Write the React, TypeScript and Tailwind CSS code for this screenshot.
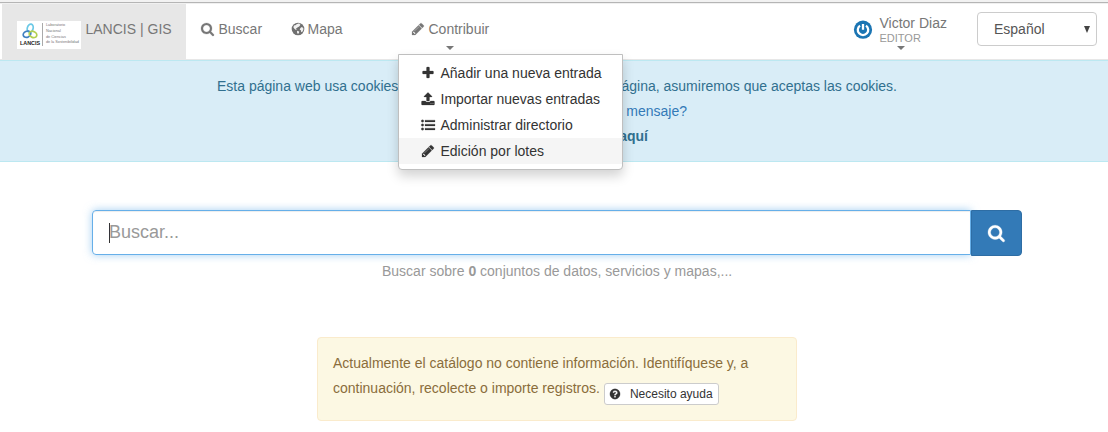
import React from "react";

const SEARCH =
  "M1152 832q0-185-131.5-316.5t-316.5-131.5-316.5 131.5-131.5 316.5 131.5 316.5 316.5 131.5 316.5-131.5 131.5-316.5zm512 832q0 52-38 90t-90 38q-54 0-90-38l-343-342q-179 124-399 124-143 0-273.5-55.5t-225-150-150-225-55.5-273.5 55.5-273.5 150-225 225-150 273.5-55.5 273.5 55.5 225 150 150 225 55.5 273.5q0 220-124 399l343 343q37 37 37 90z";
const PLUS =
  "M1600 736v192q0 40-28 68t-68 28h-416v416q0 40-28 68t-68 28h-192q-40 0-68-28t-28-68v-416h-416q-40 0-68-28t-28-68v-192q0-40 28-68t68-28h416v-416q0-40 28-68t68-28h192q40 0 68 28t28 68v416h416q40 0 68 28t28 68z";
const UPLOAD =
  "M1344 1472q0-26-19-45t-45-19-45 19-19 45 19 45 45 19 45-19 19-45zm256 0q0-26-19-45t-45-19-45 19-19 45 19 45 45 19 45-19 19-45zm128-224v320q0 40-28 68t-68 28h-1472q-40 0-68-28t-28-68v-320q0-40 28-68t68-28h427q21 56 70.5 92t110.5 36h256q61 0 110.5-36t70.5-92h427q40 0 68 28t28 68zm-325-648q-17 40-59 40h-256v448q0 26-19 45t-45 19h-256q-26 0-45-19t-19-45v-448h-256q-42 0-59-40-17-39 14-69l448-448q18-19 45-19t45 19l448 448q31 30 14 69z";
const LIST =
  "M192 224a160 160 0 1 0 0 320a160 160 0 1 0 0-320zM192 736a160 160 0 1 0 0 320a160 160 0 1 0 0-320zM192 1248a160 160 0 1 0 0 320a160 160 0 1 0 0-320zM512 272h1280v224h-1280zM512 784h1280v224h-1280zM512 1296h1280v224h-1280z";
const PENCIL =
  "M491 1536l91-91-235-235-91 91v107h128v128h107zm523-928q0-22-22-22-10 0-17 7l-542 542q-7 7-7 17 0 22 22 22 10 0 17-7l542-542q7-7 7-17zm-54-192l416 416-832 832h-416v-416zm683 96q0 53-37 90l-166 166-416-416 166-165q36-38 90-38 53 0 91 38l235 234q37 39 37 91z";
const QUESTION =
  "M1024 1376v-192q0-14-9-23t-23-9h-192q-14 0-23 9t-9 23v192q0 14 9 23t23 9h192q14 0 23-9t9-23zm256-672q0-88-55.5-163t-138.5-116-170-41q-243 0-371 213-15 24 8 42l132 100q7 6 19 6 16 0 25-12 53-68 86-92 34-24 86-24 48 0 85.5 26t37.5 59q0 38-20 61t-68 45q-63 28-115.5 86.5t-52.5 125.5v36q0 14 9 23t23 9h192q14 0 23-9t9-23q0-19 21.5-49.5t54.5-49.5q32-18 49-28.5t46-35 44.5-48 28-60.5 12.5-81zm384 192q0 209-103 385.5t-279.5 279.5-385.5 103-385.5-103-279.5-279.5-103-385.5 103-385.5 279.5-279.5 385.5-103 385.5 103 279.5 279.5 103 385.5z";

function Icon({ d, className = "size-3.5" }: { d: string; className?: string }) {
  return (
    <svg viewBox="0 0 1792 1792" fill="currentColor" stroke="currentColor" strokeWidth="30" className={`shrink-0 overflow-visible ${className}`}>
      <path d={d} />
    </svg>
  );
}

function Globe() {
  return (
    <svg viewBox="0 0 14 14" className="size-3.5 shrink-0">
      <circle cx="7" cy="7" r="6.3" fill="#707070" />
      <path d="M7.4 1.6L9.6 2 8.6 3 9.3 3.6 7.8 4.8 6.6 5.3 5.9 6.3 4.8 6.3 5.7 7.9 4.6 7.8 3.2 6.6 2.4 5.3 3 3.6 4.4 3.3 5.6 2.3zM9.4 5.9L10.8 4.9 12.3 6.1 12.3 8 11 10.2 10.1 9.7 9.9 8.3 8.7 7.7zM6.1 8.8L8.2 9.6 8 10.9 6.9 12 6 10.6z" fill="#fff" opacity="0.9" />
    </svg>
  );
}

function Caret() {
  return <span className="block h-0 w-0 border-x-4 border-t-4 border-x-transparent border-t-[#777]" />;
}

function Logo() {
  return (
    <div className="flex h-7 w-16 bg-white">
      <div className="flex w-[25px] flex-col items-center pt-[2px] pl-px">
        <svg viewBox="0 0 16 17" className="h-[17px] w-4" fill="none" strokeWidth="1.7">
          <ellipse cx="8.2" cy="5.2" rx="2.9" ry="4.2" stroke="#6cc9e6" transform="rotate(15 8.2 5.2)" />
          <ellipse cx="5" cy="11.2" rx="3.9" ry="3" stroke="#3f7fc0" transform="rotate(-25 5 11.2)" />
          <ellipse cx="11" cy="11.4" rx="3.9" ry="3" stroke="#b3d050" transform="rotate(25 11 11.4)" />
        </svg>
        <span className="text-[5.4px] leading-[7px] font-bold text-[#222]">LANCIS</span>
      </div>
      <div className="mt-0.5 h-[23px] w-px bg-[#aaa]" />
      <div className="flex flex-col pt-[2px] pl-[3px] text-[3.8px] leading-[5.8px] whitespace-nowrap text-[#777]">
        <span>Laboratorio</span>
        <span>Nacional</span>
        <span>de Ciencias</span>
        <span>de la Sostenibilidad</span>
      </div>
    </div>
  );
}

const menu = [
  { d: PLUS, label: "Añadir una nueva entrada" },
  { d: UPLOAD, label: "Importar nuevas entradas" },
  { d: LIST, label: "Administrar directorio" },
  { d: PENCIL, label: "Edición por lotes", active: true },
];

function ContributeMenu() {
  return (
    <ul className="absolute top-[50px] -left-[13px] z-10 w-[225px] rounded-b border border-[#bfbfbf] bg-white py-[5px] shadow-[0_6px_12px_rgba(0,0,0,0.175)]">
      {menu.map((m) => (
        <li key={m.label} className={`flex h-[26px] items-center gap-1.5 pl-[21.5px] text-[#333] ${m.active ? "bg-[#f5f5f5]" : ""}`}>
          <Icon d={m.d} />
          <span>{m.label}</span>
        </li>
      ))}
    </ul>
  );
}

export default function App() {
  return (
    <div className="h-[432px] w-[1108px] overflow-hidden bg-white font-['Liberation_Sans',Arial,sans-serif] text-sm leading-5 text-[#333]">
      <div className="h-[3px] border-b border-[#b5b5b5] bg-[#f2f2f2]" />
      <header className="flex h-[57px] border-t border-b border-t-[#f0f0f0] border-b-[#e7e7e7] pl-0.5 text-[#777]">
        <div className="flex w-[184px] bg-[#e7e7e7] pt-[17px] pl-[15px]">
          <Logo />
          <span className="-mt-1.5 ml-[4.5px] pt-[4px]">LANCIS | GIS</span>
        </div>
        <nav className="flex pt-[15px] pl-[15px]">
          <div className="flex h-5 w-[90px] items-center gap-[3.5px]"><Icon d={SEARCH} />Buscar</div>
          <div className="flex h-5 w-[120px] items-center gap-[2.5px]"><Globe />Mapa</div>
          <div className="relative h-5 w-[110px]">
            <div className="flex items-center gap-[3.5px]"><Icon d={PENCIL} />Contribuir</div>
            <div className="pt-[7px] pl-[35px]"><Caret /></div>
            <div className="absolute top-0 left-0 -mt-[15px]"><ContributeMenu /></div>
          </div>
        </nav>
        <div className="ml-auto flex w-[124px] pt-4">
          <svg viewBox="0 0 20 20" className="size-5 shrink-0">
            <circle cx="10" cy="9.7" r="9.1" fill="#1b75b3" />
            <path d="M7 5.6A5.2 5.2 0 1 0 13 5.6M10 4v5.8" fill="none" stroke="#fff" strokeWidth="2.3" />
          </svg>
          <div className="-mt-[7px] pl-[6.5px]">
            <div className="h-[18px]">Victor Diaz</div>
            <div className="text-[11px] leading-[15px] text-[#999]">EDITOR</div>
            <div className="pl-[17px]"><Caret /></div>
          </div>
        </div>
        <div className="mt-2 mr-[11px] flex h-[34px] w-[120px] items-center justify-between rounded border border-[#ccc] pr-1.5 pl-4 text-[#555]">
          <span>Español</span>
          <svg viewBox="0 0 6 7" className="h-[7px] w-1.5"><path d="M0 0h6L3 7z" fill="#444" /></svg>
        </div>
      </header>
      <section className="h-[102px] border-t border-b border-[#bce8f1] bg-[#d9edf7] pt-[13px] leading-[25px] text-[#31708f]">
        <div className="flex justify-between pr-[211px] pl-[217px]">
          <span>Esta página web usa cookies</span>
          <span>página, asumiremos que aceptas las cookies.</span>
        </div>
        <div className="pr-[421px] text-right text-[#337ab7]">este mensaje?</div>
        <div className="pr-[460px] text-right font-bold">aquí</div>
      </section>
      <main>
        <div className="mt-12 ml-[92px] flex h-[46px] w-[930px]">
          <div className="flex h-[45px] flex-1 items-center rounded-l border border-[#66afe9] pl-4 text-lg text-[#999] shadow-[inset_0_1px_1px_rgba(0,0,0,0.075),0_0_8px_rgba(102,175,233,0.6)]">
            <span className="h-5 w-px bg-[#333]" /><span className="-ml-px -mt-0.5">Buscar...</span>
          </div>
          <button className="flex w-[51px] items-center justify-center rounded-r border border-[#2e6da4] bg-[#337ab7] text-white"><Icon d={SEARCH} className="size-[18px]" /></button>
        </div>
        <p className="mt-[5px] ml-[382px] text-[#999]">Buscar sobre <b>0</b> conjuntos de datos, servicios y mapas,...</p>
        <div className="mt-14 ml-[317px] h-[84px] w-[480px] rounded border border-[#faebcc] bg-[#fcf8e3] pt-[13px] pl-[15px] leading-[25px] whitespace-nowrap text-[#8a6d3b]">
          <div>Actualmente el catálogo no contiene información. Identifíquese y, a</div>
          <div className="flex">
            <span>continuación, recolecte o importe registros.</span>
            <button className="mt-[7px] ml-1 flex h-[22px] w-[115px] items-center rounded-[3px] border border-[#ccc] bg-white pl-[4px] text-xs text-[#333]"><Icon d={QUESTION} className="size-3" /><span className="ml-[9px]">Necesito ayuda</span></button>
          </div>
        </div>
      </main>
    </div>
  );
}
